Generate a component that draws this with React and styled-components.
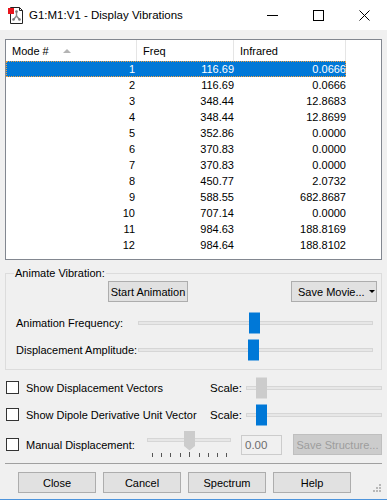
import React from 'react'
import styled, { createGlobalStyle } from 'styled-components'

const Global = createGlobalStyle`
	html, body {
		margin: 0;
		padding: 0;
		background: #f0f0f0;
	}
	* {
		box-sizing: border-box;
	}
`

const modes = [
	[1, '116.69', '0.0666'],
	[2, '116.69', '0.0666'],
	[3, '348.44', '12.8683'],
	[4, '348.44', '12.8699'],
	[5, '352.86', '0.0000'],
	[6, '370.83', '0.0000'],
	[7, '370.83', '0.0000'],
	[8, '450.77', '2.0732'],
	[9, '588.55', '682.8687'],
	[10, '707.14', '0.0000'],
	[11, '984.63', '188.8169'],
	[12, '984.64', '188.8102']
]

const Window = styled.div`
	width: 387px;
	height: 500px;
	background: #f0f0f0;
	border-bottom: 1px solid #4d94dc;
	display: flex;
	flex-direction: column;
	font-family: "Liberation Sans", Arial, sans-serif;
	font-size: 11px;
	color: #000;
	overflow: hidden;
`

const TitleBar = styled.div`
	height: 30px;
	background: #fff;
	display: flex;
	align-items: center;
	flex-shrink: 0;
`

const AppIcon = styled.svg`
	margin-left: 7px;
	width: 18px;
	height: 18px;
	flex-shrink: 0;
`

const Title = styled.div`
	margin-left: 4px;
	font-size: 11.5px;
	color: #000;
`

const Controls = styled.div`
	margin-left: auto;
	display: flex;
	height: 30px;
`

const Control = styled.div`
	width: 46px;
	height: 30px;
	display: flex;
	align-items: center;
	justify-content: center;
`

const Body = styled.div`
	padding: 9px 5px 0 5px;
	display: flex;
	flex-direction: column;
`

const ListBox = styled.div`
	height: 221px;
	border: 1px solid #828790;
	background: #fff;
`

const Header = styled.div`
	display: grid;
	grid-template-columns: 131px 97px 112px 1fr;
	height: 21px;
`

const HeadCell = styled.div`
	padding-left: 6px;
	display: flex;
	align-items: center;
	border-right: ${p => (p.$last ? 'none' : '1px solid #e5e5e5')};
`

const SortArrow = styled.span`
	margin-left: 14px;
	width: 0;
	height: 0;
	border-left: 4px solid transparent;
	border-right: 4px solid transparent;
	border-bottom: 4px solid #b4b4b4;
`

const Row = styled.div`
	display: grid;
	grid-template-columns: 131px 97px 112px;
	width: 340px;
	height: 16px;
	line-height: 14px;
	background: ${p => (p.$selected ? '#0078d7' : 'transparent')};
	color: ${p => (p.$selected ? '#fff' : '#000')};
	border: 1px dotted ${p => (p.$selected ? '#f0a040' : 'transparent')};
`

const Cell = styled.div`
	text-align: right;
	padding-right: ${p => p.$pad}px;
`

const Group = styled.fieldset`
	margin: 7px 0 0 0;
	border: 1px solid #dcdcdc;
	padding: 1px 4px 8px 10px;
	min-width: 0;
`

const Legend = styled.legend`
	margin-left: -2px;
	padding: 0 1px;
	line-height: 13px;
`

const ButtonRow = styled.div`
	display: flex;
	height: 21px;
`

const Button = styled.button`
	font-family: inherit;
	font-size: 11px;
	color: ${p => (p.disabled ? '#9d9d9d' : '#000')};
	background: ${p => (p.disabled ? '#cccccc' : '#e1e1e1')};
	border: 1px solid ${p => (p.disabled ? '#bfbfbf' : '#adadad')};
	height: 21px;
	width: ${p => p.$w}px;
	padding: 0;
	display: flex;
	align-items: center;
	justify-content: center;
	flex-shrink: 0;
`

const StartButton = styled(Button)`
	margin-left: 92px;
`

const MovieButton = styled(Button)`
	margin-left: auto;
	justify-content: flex-start;
	padding-left: 6px;
`

const DropArrow = styled.span`
	margin-left: 4px;
	width: 0;
	height: 0;
	border-left: 3px solid transparent;
	border-right: 3px solid transparent;
	border-top: 3px solid #000;
`

const SliderRow = styled.div`
	display: flex;
	align-items: center;
	height: 22px;
	margin-top: ${p => p.$top}px;
	padding-right: 4px;
`

const SliderLabel = styled.div`
	width: ${p => p.$w}px;
	flex-shrink: 0;
`

const Track = styled.div`
	position: relative;
	flex: 1;
	height: 4px;
	background: #e7e7e7;
	border: 1px solid #d6d6d6;
`

const Thumb = styled.div`
	position: absolute;
	top: 50%;
	width: 11px;
	height: 21px;
	transform: translateY(-50%);
	background: ${p => (p.$active ? '#0078d7' : '#cccccc')};
`

const OptionRow = styled.div`
	display: flex;
	align-items: center;
	height: ${p => p.$h}px;
	margin-top: ${p => p.$top}px;
`

const Check = styled.div`
	margin-left: 1px;
	width: 13px;
	height: 13px;
	border: 1px solid #333;
	background: #fff;
	flex-shrink: 0;
`

const OptionLabel = styled.div`
	margin-left: 7px;
	width: ${p => p.$w}px;
	flex-shrink: 0;
	white-space: nowrap;
`

const ScaleLabel = styled.div`
	width: 36px;
	flex-shrink: 0;
	font-size: 11.5px;
`

const TickSlider = styled.svg`
	width: 87px;
	height: 27px;
	flex-shrink: 0;
`

const ValueBox = styled.div`
	margin-left: 9px;
	width: 42px;
	height: 20px;
	border: 1px solid #cccccc;
	color: #6d6d6d;
	padding-left: 3px;
	display: flex;
	align-items: center;
	font-size: 11.5px;
`

const StructureButton = styled(Button)`
	margin-left: 11px;
`

const Separator = styled.div`
	margin-top: 5px;
	height: 1px;
	background: #a0a0a0;
`

const ButtonBar = styled.div`
	display: flex;
	gap: 7px;
	margin-top: 8px;
	padding-left: 13px;
	height: 22px;
`

const Grip = styled.svg`
	margin-left: auto;
	margin-right: 1px;
	align-self: flex-end;
	width: 10px;
	height: 10px;
`

const Slider = ({ pos, active = true }) => (
	<Track>
		<Thumb $active={active} style={{ left: pos }} />
	</Track>
)

export default function App() {
	return (
		<Window>
			<Global />
			<TitleBar>
				<AppIcon viewBox="0 0 18 18">
					<path d="M3.5 1.5h9l3 3v13h-12z" fill="#fff" stroke="#222" />
					<path d="M12.5 1.5v3h3" fill="none" stroke="#222" />
					<line x1="9.5" y1="5.5" x2="9.5" y2="10" stroke="#8a8a8a" strokeWidth="1.4" />
					<line x1="9.5" y1="10" x2="6.5" y2="13.5" stroke="#8a8a8a" strokeWidth="1.4" />
					<line x1="9.5" y1="10" x2="12.5" y2="13.5" stroke="#8a8a8a" strokeWidth="1.4" />
					<circle cx="9.5" cy="5.5" r="1.3" fill="#777" />
					<circle cx="6.5" cy="13.5" r="1.3" fill="#777" />
					<circle cx="12.5" cy="13.5" r="1.3" fill="#777" />
					<rect x="1" y="2" width="6" height="6" fill="#e8141c" />
				</AppIcon>
				<Title>G1:M1:V1 - Display Vibrations</Title>
				<Controls>
					<Control>
						<svg width="11" height="11" viewBox="0 0 11 11">
							<line x1="0" y1="5.5" x2="11" y2="5.5" stroke="#000" />
						</svg>
					</Control>
					<Control>
						<svg width="11" height="11" viewBox="0 0 11 11">
							<rect x="0.5" y="0.5" width="10" height="10" fill="none" stroke="#000" />
						</svg>
					</Control>
					<Control>
						<svg width="11" height="11" viewBox="0 0 11 11">
							<path d="M0.5 0.5L10.5 10.5M10.5 0.5L0.5 10.5" stroke="#000" />
						</svg>
					</Control>
				</Controls>
			</TitleBar>

			<Body>
				<ListBox>
					<Header>
						<HeadCell>
							Mode #
							<SortArrow />
						</HeadCell>
						<HeadCell>Freq</HeadCell>
						<HeadCell>Infrared</HeadCell>
						<HeadCell $last />
					</Header>
					{modes.map(([n, freq, ir]) => (
						<Row key={n} $selected={n === 1}>
							<Cell $pad={3}>{n}</Cell>
							<Cell $pad={1}>{freq}</Cell>
							<Cell $pad={1}>{ir}</Cell>
						</Row>
					))}
				</ListBox>

				<Group>
					<Legend>Animate Vibration:</Legend>
					<ButtonRow>
						<StartButton $w={80}>Start Animation</StartButton>
						<MovieButton $w={86}>
							Save Movie...
							<DropArrow />
						</MovieButton>
					</ButtonRow>
					<SliderRow $top={10}>
						<SliderLabel $w={122}>Animation Frequency:</SliderLabel>
						<Slider pos={110} />
					</SliderRow>
					<SliderRow $top={5}>
						<SliderLabel $w={122}>Displacement Amplitude:</SliderLabel>
						<Slider pos={109} />
					</SliderRow>
				</Group>

				<OptionRow $h={21} $top={7}>
					<Check />
					<OptionLabel $w={184}>Show Displacement Vectors</OptionLabel>
					<ScaleLabel>Scale:</ScaleLabel>
					<Slider pos={9} active={false} />
				</OptionRow>
				<OptionRow $h={21} $top={6}>
					<Check />
					<OptionLabel $w={184}>Show Dipole Derivative Unit Vector</OptionLabel>
					<ScaleLabel>Scale:</ScaleLabel>
					<Slider pos={9} />
				</OptionRow>
				<OptionRow $h={27} $top={6}>
					<Check />
					<OptionLabel $w={119}>Manual Displacement:</OptionLabel>
					<TickSlider viewBox="0 0 87 27">
						<rect x="2.5" y="7.5" width="83" height="3" fill="#e7e7e7" stroke="#d6d6d6" />
						{[7, 16, 25, 35, 44, 54, 63, 72, 81].map(x => (
							<line
								key={x}
								x1={x + 0.5}
								y1={x === 44 ? 21 : 22}
								x2={x + 0.5}
								y2="26"
								stroke="#555"
							/>
						))}
						<path d="M39 0h11v15l-5.5 4.5l-5.5-4.5z" fill="#cccccc" />
					</TickSlider>
					<ValueBox>0.00</ValueBox>
					<StructureButton $w={89} disabled>Save Structure...</StructureButton>
				</OptionRow>

				<Separator />

				<ButtonBar>
					<Button $w={78}>Close</Button>
					<Button $w={78}>Cancel</Button>
					<Button $w={78}>Spectrum</Button>
					<Button $w={78}>Help</Button>
					<Grip viewBox="0 0 10 10">
						<rect x="8" y="0" width="2" height="2" fill="#b8b8b8" />
						<rect x="5" y="3" width="2" height="2" fill="#b8b8b8" />
						<rect x="8" y="3" width="2" height="2" fill="#b8b8b8" />
						<rect x="2" y="6" width="2" height="2" fill="#b8b8b8" />
						<rect x="5" y="6" width="2" height="2" fill="#b8b8b8" />
						<rect x="8" y="6" width="2" height="2" fill="#b8b8b8" />
					</Grip>
				</ButtonBar>
			</Body>
		</Window>
	)
}
